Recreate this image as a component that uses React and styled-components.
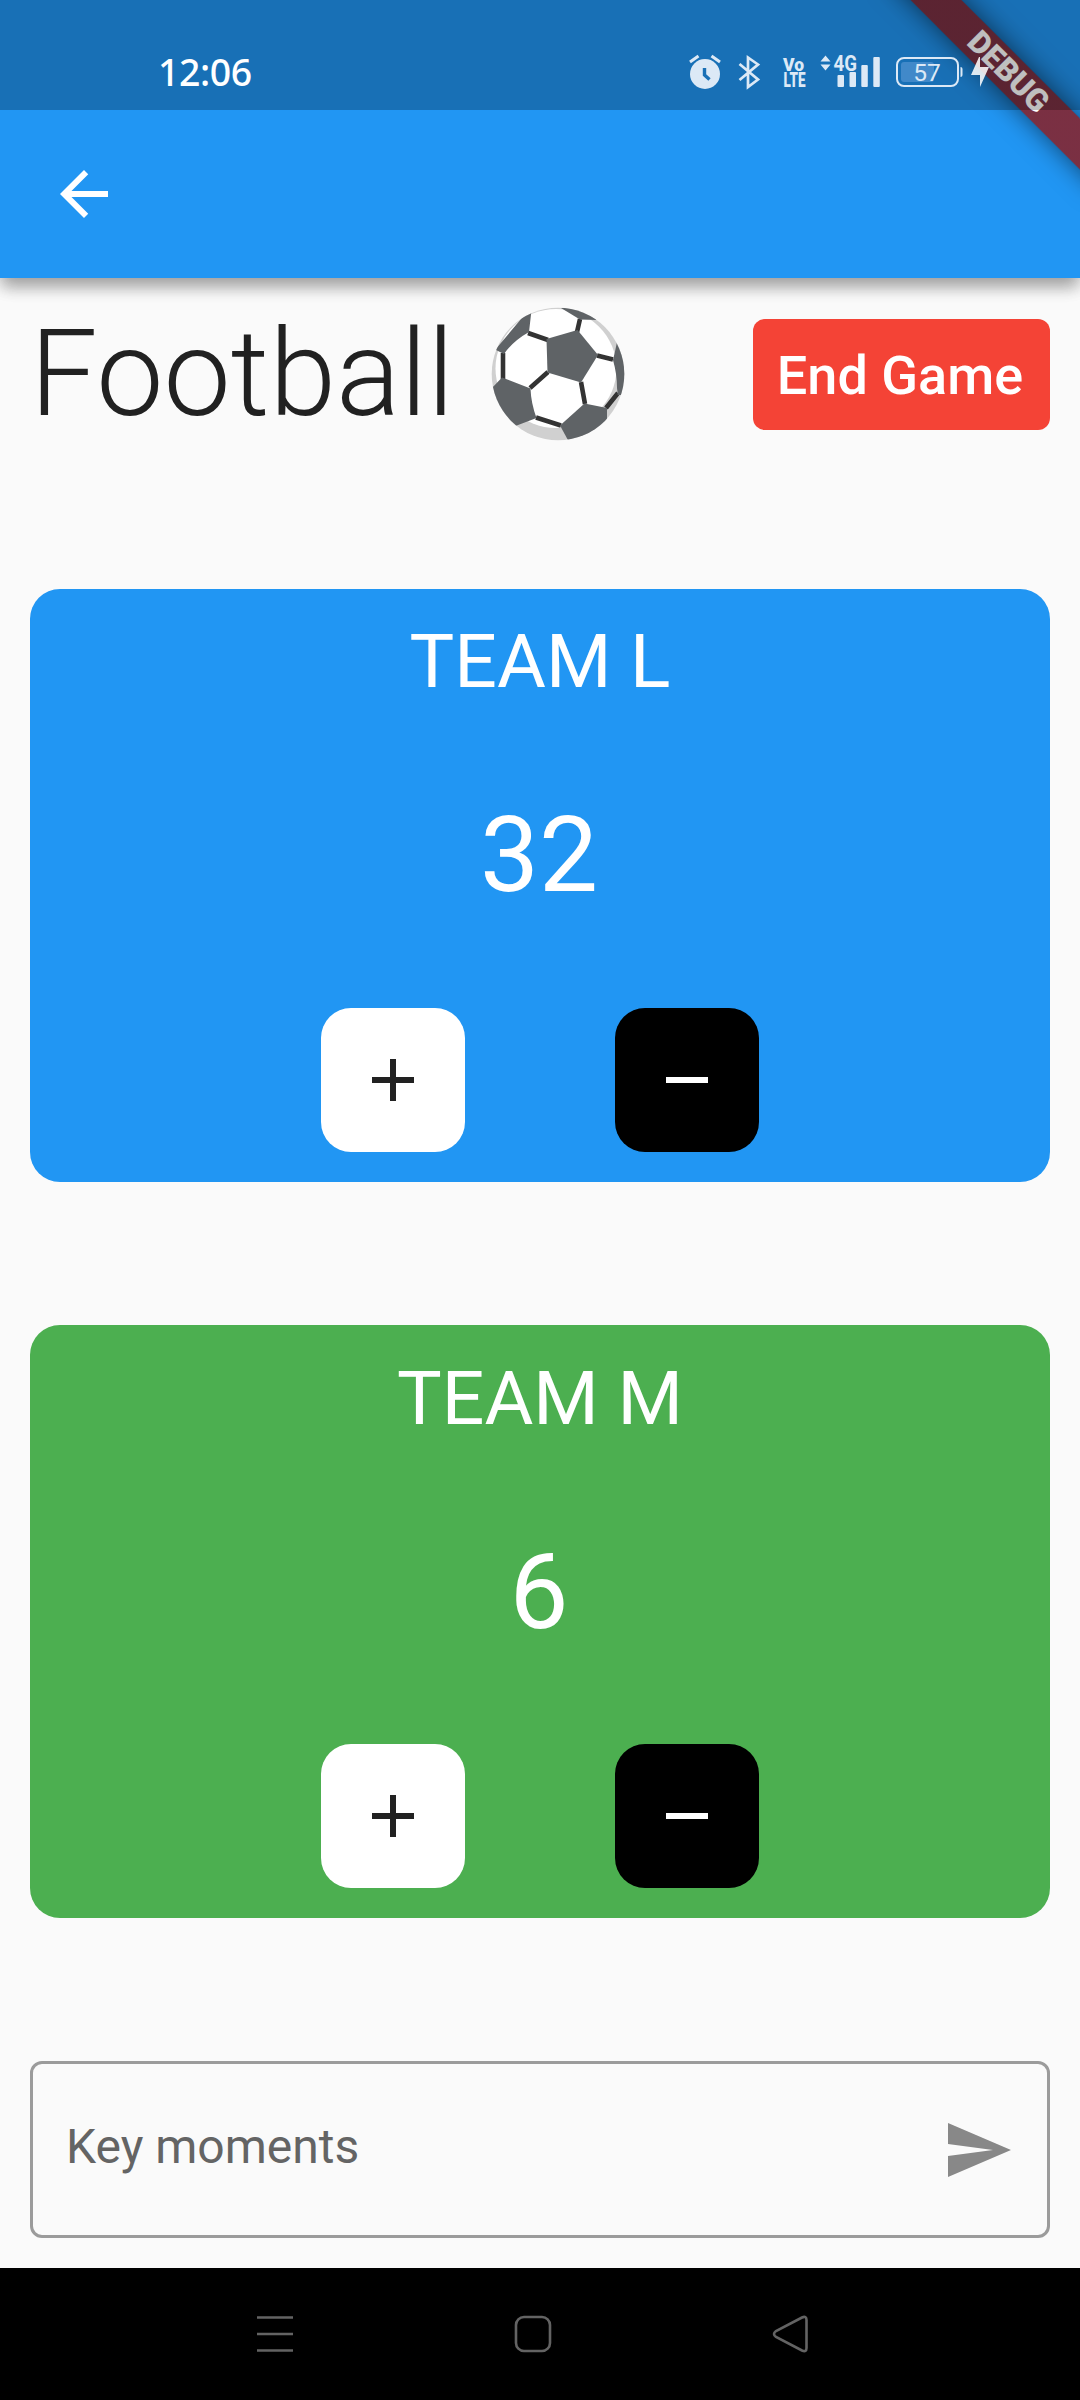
import React from "react";
import styled, { createGlobalStyle } from "styled-components";

const Global = createGlobalStyle`
  body { margin: 0; background: #fafafa; }
  * { box-sizing: border-box; }
`;

const Screen = styled.div`
  position: relative;
  width: 1080px;
  height: 2400px;
  display: flex;
  flex-direction: column;
  overflow: hidden;
  background: #fafafa;
  font-family: Roboto, "Liberation Sans", sans-serif;
`;

const StatusBar = styled.header`
  position: absolute;
  top: 0;
  left: 0;
  width: 1080px;
  height: 110px;
  padding: 34px 89px 0 158px;
  display: flex;
  justify-content: space-between;
  background: rgba(0, 0, 0, 0.25);
`;

const Clock = styled.time`
  font: 500 37.4px/76px "Noto Sans", "Open Sans", sans-serif;
  letter-spacing: -0.4px;
  color: #fff;
`;

const StatusIcons = styled.svg`
  display: block;
  width: 310px;
  height: 50px;
  margin-top: 11px;
`;

const AppBar = styled.nav`
  flex: none;
  height: 278px;
  padding: 110px 0 0 48px;
  display: flex;
  align-items: center;
  background: #2196f3;
  box-shadow: 0 12px 15px -3px rgba(0, 0, 0, 0.2), 0 9px 15px rgba(0, 0, 0, 0.13),
    0 3px 20px rgba(0, 0, 0, 0.12);
`;

const IconButton = styled.button`
  display: flex;
  padding: 0;
  border: 0;
  background: none;
  color: ${(p) => p.$color};
`;

const SendButton = styled(IconButton)`
  margin-top: 2px;
`;

const Glyph = styled.svg`
  display: block;
  width: 72px;
  height: 72px;
  fill: currentColor;
`;

const Body = styled.main`
  flex: 1;
  display: flex;
  flex-direction: column;
  justify-content: space-between;
  padding: 24px 30px 30px;
`;

const TitleRow = styled.div`
  display: flex;
  align-items: center;
  justify-content: space-between;
  height: 144px;
`;

const Title = styled.h1`
  display: flex;
  align-items: center;
  margin: 0;
  font-size: 120px;
  line-height: 141px;
  font-weight: 300;
  color: #212121;
  white-space: pre;
`;

const Ball = styled.svg`
  display: block;
  width: 136px;
  height: 136px;
  margin-left: 36px;
`;

const EndButton = styled.button`
  width: 297px;
  height: 111px;
  padding: 2px 3px 0 0;
  border: 0;
  border-radius: 12px;
  background: #f44336;
  color: #fff;
  font: 500 54px/63px Roboto, sans-serif;
`;

const Card = styled.section`
  display: flex;
  flex-direction: column;
  align-items: center;
  justify-content: space-between;
  height: 593.7px;
  padding: 30px;
  border-radius: 30px;
  background: ${(p) => p.$color};
  color: #fff;
`;

const TeamName = styled.h2`
  margin: -1.2px 0 0;
  font-size: 75px;
  line-height: 88px;
  font-weight: 400;
`;

const Score = styled.output`
  margin-bottom: 2px;
  padding-right: 2px;
  font-size: 105px;
  line-height: 123px;
`;

const Controls = styled.div`
  display: flex;
  gap: 150px;
`;

const StepButton = styled.button`
  display: flex;
  align-items: center;
  justify-content: center;
  width: 144px;
  height: 144px;
  padding: 0;
  border: 0;
  border-radius: 30px;
  background: ${(p) => (p.$dark ? "#000" : "#fff")};
  color: ${(p) => (p.$dark ? "#fff" : "#212121")};
`;

const Field = styled.div`
  display: flex;
  align-items: center;
  justify-content: space-between;
  height: 177px;
  padding: 0 33px;
  border: 3px solid #9b9b9b;
  border-radius: 12px;
`;

const Placeholder = styled.span`
  font-size: 48px;
  line-height: 56px;
  margin-top: -5px;
  color: #646464;
`;

const SystemNav = styled.footer`
  flex: none;
  display: flex;
  align-items: flex-start;
  justify-content: center;
  gap: 204px;
  height: 132px;
  padding: 39px 14px 0 0;
  background: #000;
`;

const NavGlyph = styled.svg`
  display: block;
  width: 54px;
  height: 54px;
  fill: none;
  stroke: #636363;
  stroke-width: 2.6;
`;

const DebugBanner = styled.div`
  position: absolute;
  top: 53px;
  left: 856.5px;
  width: 300px;
  height: 36px;
  padding-left: 3px;
  transform: rotate(45deg);
  background: linear-gradient(rgba(183, 28, 28, 0.63), rgba(183, 28, 28, 0.63)), rgba(0, 0, 0, 0.45);
  box-shadow: 0 0 26px rgba(0, 0, 0, 0.55);
  color: #fff;
  text-align: center;
  font: 900 31.4px/36px Roboto, sans-serif;
`;

const ArrowBack = () => (
  <Glyph viewBox="0 0 24 24">
    <path d="M20 11H7.83l5.59-5.59L12 4l-8 8 8 8 1.41-1.41L7.83 13H20z" />
  </Glyph>
);

const Plus = () => (
  <Glyph viewBox="0 0 24 24">
    <path d="M19 13h-6v6h-2v-6H5v-2h6V5h2v6h6z" />
  </Glyph>
);

const Minus = () => (
  <Glyph viewBox="0 0 24 24">
    <path d="M19 13H5v-2h14z" />
  </Glyph>
);

const Send = () => (
  <Glyph viewBox="0 0 24 24">
    <path d="M2 21 23 12 2 3v7l15 2-15 2z" />
  </Glyph>
);

const SoccerBall = () => (
  <Ball viewBox="490 306 136 136">
    <defs>
      <clipPath id="ball">
        <circle cx="558" cy="374" r="66.300" />
      </clipPath>
    </defs>
    <circle cx="558" cy="374" r="66.300" fill="#d0d0d0" />
    <g clipPath="url(#ball)">
      <ellipse cx="556" cy="368.500" rx="60.500" ry="59.500" fill="#fff" />
      <g stroke="#333" strokeWidth="4.600" fill="none">
        <path d="M528 333 548 340M580 319 577 332M597 355.500 613 359.500M548 372 530 388M581 382 585 404M503 353V379M536 417.500 561 425.500M606 408 618 393" />
      </g>
      <g fill="#5f6366">
        <path d="M546.500 339 577.500 330 598 355 581 382.500 547.500 372.500Z" />
        <path d="M490 356 532 306 529 332Q513 341 504 354L496 350Z" />
        <path d="M502 377.500 530.500 388.500Q531 403 536.500 418L515.500 426Q498 424 490 390Z" />
        <path d="M560 425.500 584.500 403.500 607 408V430L569 442Z" />
        <path d="M617 342 626 350V395H617.500Q618 395 617 388 617 374 613 360 615 352 617 342Z" />
        <path d="M561 308 578 306 597 320 580 319.500Z" />
      </g>
    </g>
  </Ball>
);

const Indicators = () => (
  <StatusIcons viewBox="681 45 310 50" fill="#dce9f6">
    <circle cx="705" cy="74" r="15" />
    <path d="M690 62 698.500 56M711.500 56 720 62" stroke="#dce9f6" strokeWidth="3" fill="none" />
    <path d="M704.500 68V75L709.500 79.500" stroke="#1a70b6" strokeWidth="3.400" fill="none" />
    <path
      d="M739.500 64 758 79.500 748 87V57.500L758 64.500 739.500 80"
      stroke="#dce9f6"
      strokeWidth="2.700"
      fill="none"
    />
    <text x="783" y="70.500" fontFamily="Roboto" fontSize="18" fontWeight="900" textLength="21" lengthAdjust="spacingAndGlyphs">Vo</text>
    <text x="783.500" y="87" fontFamily="Roboto" fontSize="19.500" fontWeight="900" textLength="22" lengthAdjust="spacingAndGlyphs">LTE</text>
    <path d="M820.500 61.500 825.500 55.500 830.500 61.500ZM820.500 64.500H830.500L825.500 70.500Z" />
    <text x="833.500" y="70.500" fontFamily="Roboto" fontSize="21.500" fontWeight="700" textLength="23.500" lengthAdjust="spacingAndGlyphs">4G</text>
    <rect x="837.500" y="75" width="6.500" height="12" rx="1" />
    <rect x="849.500" y="72" width="6.500" height="15" rx="1" />
    <rect x="861.300" y="65" width="6.500" height="22" rx="1" />
    <rect x="873.300" y="57" width="6.500" height="30" rx="1" />
    <rect x="901" y="62" width="33" height="20" rx="3" fill="#4189c9" />
    <rect x="897" y="58" width="61" height="28" rx="7" fill="none" stroke="#dce9f6" strokeWidth="2" />
    <path d="M960.500 67Q962.500 67 962.500 69V75Q962.500 77 960.500 77Z" />
    <text x="927" y="81" fontFamily="Roboto" fontSize="24.500" textAnchor="middle">57</text>
    <path d="M979 57 971 75H980V87L989 67H980V57Z" fill="#fff" fillOpacity="0.860" />
  </StatusIcons>
);

const TeamCard = ({ name, score, color }) => (
  <Card $color={color}>
    <TeamName>{name}</TeamName>
    <Score>{score}</Score>
    <Controls>
      <StepButton aria-label="Add point"><Plus /></StepButton>
      <StepButton $dark aria-label="Remove point"><Minus /></StepButton>
    </Controls>
  </Card>
);

export default function App() {
  return (
    <Screen>
      <Global />
      <AppBar>
        <IconButton $color="#fff" aria-label="Back"><ArrowBack /></IconButton>
      </AppBar>
      <Body>
        <TitleRow>
          <Title>Football<SoccerBall /></Title>
          <EndButton>End Game</EndButton>
        </TitleRow>
        <TeamCard name="TEAM L" score={32} color="#2196f3" />
        <TeamCard name="TEAM M" score={6} color="#4caf50" />
        <Field>
          <Placeholder>Key moments</Placeholder>
          <SendButton $color="#888" aria-label="Send"><Send /></SendButton>
        </Field>
      </Body>
      <SystemNav>
        <NavGlyph viewBox="0 0 54 54">
          <path d="M9 10.500H45M9 27H45M9 43.500H45" />
        </NavGlyph>
        <NavGlyph viewBox="0 0 54 54">
          <rect x="10" y="10" width="34" height="34" rx="8" />
        </NavGlyph>
        <NavGlyph viewBox="0 0 54 54">
          <path d="M38 10.500Q42.500 8.500 42.500 13V41Q42.500 45.500 38 43.500L12 30Q8 27 12 24Z" />
        </NavGlyph>
      </SystemNav>
      <DebugBanner>DEBUG</DebugBanner>
      <StatusBar>
        <Clock>12:06</Clock>
        <Indicators />
      </StatusBar>
    </Screen>
  );
}
